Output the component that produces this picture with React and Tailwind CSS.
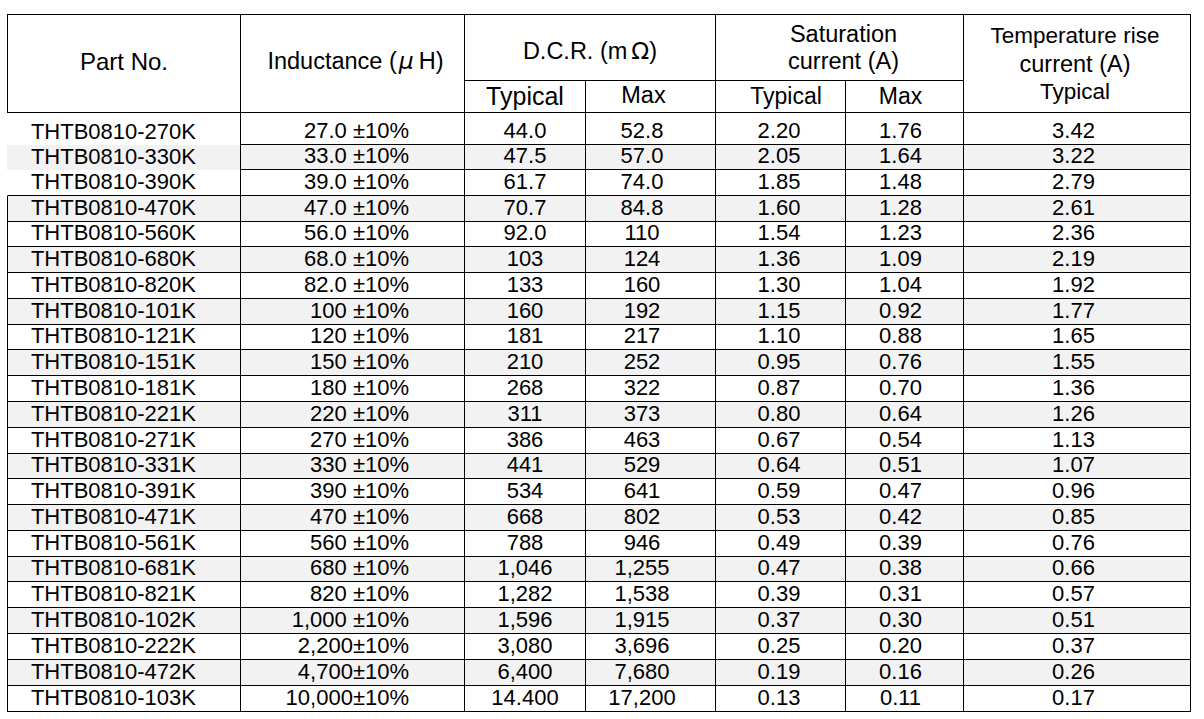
import React from "react";

const rows = [
  ["THTB0810-270K", "27.0 ±10%", "44.0", "52.8", "2.20", "1.76", "3.42"],
  ["THTB0810-330K", "33.0 ±10%", "47.5", "57.0", "2.05", "1.64", "3.22"],
  ["THTB0810-390K", "39.0 ±10%", "61.7", "74.0", "1.85", "1.48", "2.79"],
  ["THTB0810-470K", "47.0 ±10%", "70.7", "84.8", "1.60", "1.28", "2.61"],
  ["THTB0810-560K", "56.0 ±10%", "92.0", "110", "1.54", "1.23", "2.36"],
  ["THTB0810-680K", "68.0 ±10%", "103", "124", "1.36", "1.09", "2.19"],
  ["THTB0810-820K", "82.0 ±10%", "133", "160", "1.30", "1.04", "1.92"],
  ["THTB0810-101K", "100 ±10%", "160", "192", "1.15", "0.92", "1.77"],
  ["THTB0810-121K", "120 ±10%", "181", "217", "1.10", "0.88", "1.65"],
  ["THTB0810-151K", "150 ±10%", "210", "252", "0.95", "0.76", "1.55"],
  ["THTB0810-181K", "180 ±10%", "268", "322", "0.87", "0.70", "1.36"],
  ["THTB0810-221K", "220 ±10%", "311", "373", "0.80", "0.64", "1.26"],
  ["THTB0810-271K", "270 ±10%", "386", "463", "0.67", "0.54", "1.13"],
  ["THTB0810-331K", "330 ±10%", "441", "529", "0.64", "0.51", "1.07"],
  ["THTB0810-391K", "390 ±10%", "534", "641", "0.59", "0.47", "0.96"],
  ["THTB0810-471K", "470 ±10%", "668", "802", "0.53", "0.42", "0.85"],
  ["THTB0810-561K", "560 ±10%", "788", "946", "0.49", "0.39", "0.76"],
  ["THTB0810-681K", "680 ±10%", "1,046", "1,255", "0.47", "0.38", "0.66"],
  ["THTB0810-821K", "820 ±10%", "1,282", "1,538", "0.39", "0.31", "0.57"],
  ["THTB0810-102K", "1,000 ±10%", "1,596", "1,915", "0.37", "0.30", "0.51"],
  ["THTB0810-222K", "2,200±10%", "3,080", "3,696", "0.25", "0.20", "0.37"],
  ["THTB0810-472K", "4,700±10%", "6,400", "7,680", "0.19", "0.16", "0.26"],
  ["THTB0810-103K", "10,000±10%", "14.400", "17,200", "0.13", "0.11", "0.17"],
];

const heights = [
  "h-[32px] pt-[5px]",
  "h-[25px] pb-[2px]",
  "h-[26px] pb-[2px]",
  "h-[26px] pb-[2px]",
  "h-[25px] pb-[2px]",
  "h-[26px] pb-[2px]",
  "h-[26px] pb-[2px]",
  "h-[26px] pb-[2px]",
  "h-[25px] pb-[2px]",
  "h-[26px] pb-[2px]",
  "h-[26px] pb-[2px]",
  "h-[26px] pb-[2px]",
  "h-[26px] pb-[2px]",
  "h-[25px] pb-[2px]",
  "h-[26px] pb-[2px]",
  "h-[26px] pb-[2px]",
  "h-[26px] pb-[2px]",
  "h-[25px] pb-[2px]",
  "h-[26px] pb-[2px]",
  "h-[26px] pb-[2px]",
  "h-[26px] pb-[2px]",
  "h-[26px] pb-[2px]",
  "h-[26px] pb-[2px]",
];

const COLS = "grid grid-cols-[234px_224px_121px_130px_130px_118px_227px]";

function DataRow({ r, i }) {
  const gray = i % 2 === 1 ? "bg-[#f2f2f2]" : "bg-white";
  const firstBorders =
    i === 0 || i === 1
      ? "border-l border-l-transparent"
      : i === 2
      ? "border-l border-l-transparent border-b border-b-black"
      : "border-l border-l-black border-b border-b-black";
  const cell = "flex items-center whitespace-nowrap border-r border-b border-black";
  const h = heights[i];
  return (
    <div className={`${COLS} ${gray}`}>
      <div className={`flex items-center justify-end whitespace-nowrap border-r border-r-black pr-[44px] ${firstBorders} ${h}`}>
        {r[0]}
      </div>
      <div className={`${cell} justify-end pr-[55px] ${h}`}>{r[1]}</div>
      <div className={`${cell} justify-center ${h}`}>{r[2]}</div>
      <div className={`${cell} justify-center pr-[17px] ${h}`}>{r[3]}</div>
      <div className={`${cell} justify-center pr-[3px] ${h}`}>{r[4]}</div>
      <div className={`${cell} justify-center pr-[8px] ${h}`}>{r[5]}</div>
      <div className={`${cell} justify-center pr-[7px] ${h}`}>{r[6]}</div>
    </div>
  );
}

export default function App() {
  return (
    <div
      className="w-[1204px] h-[719px] overflow-hidden bg-white text-black pt-[14px] pl-[7px]"
      style={{ fontFamily: '"Liberation Sans", Arial, sans-serif' }}
    >
      <div className="w-[1184px] border-t border-black">
        {/* Header */}
        <div className={`${COLS} grid-rows-[66px_32px] text-[23px] leading-none`}>
          <div className="row-span-2 flex items-center justify-center border-l border-r border-b border-black pb-[3px] text-[24px]">
            Part No.
          </div>
          <div className="row-span-2 flex items-center justify-center whitespace-nowrap border-r border-b border-black pb-[3px] pl-[6px] text-[23.5px]">
            Inductance (
            <span className="ml-[2px] mr-[5px] italic" style={{ fontFamily: '"DejaVu Sans", sans-serif' }}>μ</span>
            H)
          </div>
          <div className="col-span-2 flex items-center justify-center whitespace-nowrap border-r border-b border-black pt-[9px] text-[23.5px]">
            D.C.R. (m<span className="ml-[4px]" style={{ fontFamily: '"DejaVu Sans", sans-serif' }}>Ω</span>)
          </div>
          <div className="col-span-2 flex flex-col items-center justify-center border-r border-b border-black pt-[1px] pl-[8px] leading-[27px] text-[23.5px]">
            <span>Saturation</span>
            <span>current (A)</span>
          </div>
          <div className="row-span-2 flex flex-col items-center justify-center border-r border-b border-black pt-[1px] pr-[4px] leading-[28px]">
            <span className="text-[22.5px]">Temperature rise</span>
            <span className="text-[23.5px]">current (A)</span>
            <span className="text-[22.5px]">Typical</span>
          </div>
          <div className="flex items-center justify-center border-r border-b border-black pb-[1px] text-[25px]">
            Typical
          </div>
          <div className="flex items-center justify-center border-r border-b border-black pb-[1px] pr-[14px] text-[23.5px]">
            Max
          </div>
          <div className="flex items-center justify-center border-r border-b border-black pb-[1px] pl-[11px] text-[23px]">
            Typical
          </div>
          <div className="flex items-center justify-center border-r border-b border-black pb-[1px] pr-[8px] text-[23px]">
            Max
          </div>
        </div>
        {/* Body */}
        <div className="text-[22px] leading-none">
          {rows.map((r, i) => (
            <DataRow key={r[0]} r={r} i={i} />
          ))}
        </div>
      </div>
    </div>
  );
}
